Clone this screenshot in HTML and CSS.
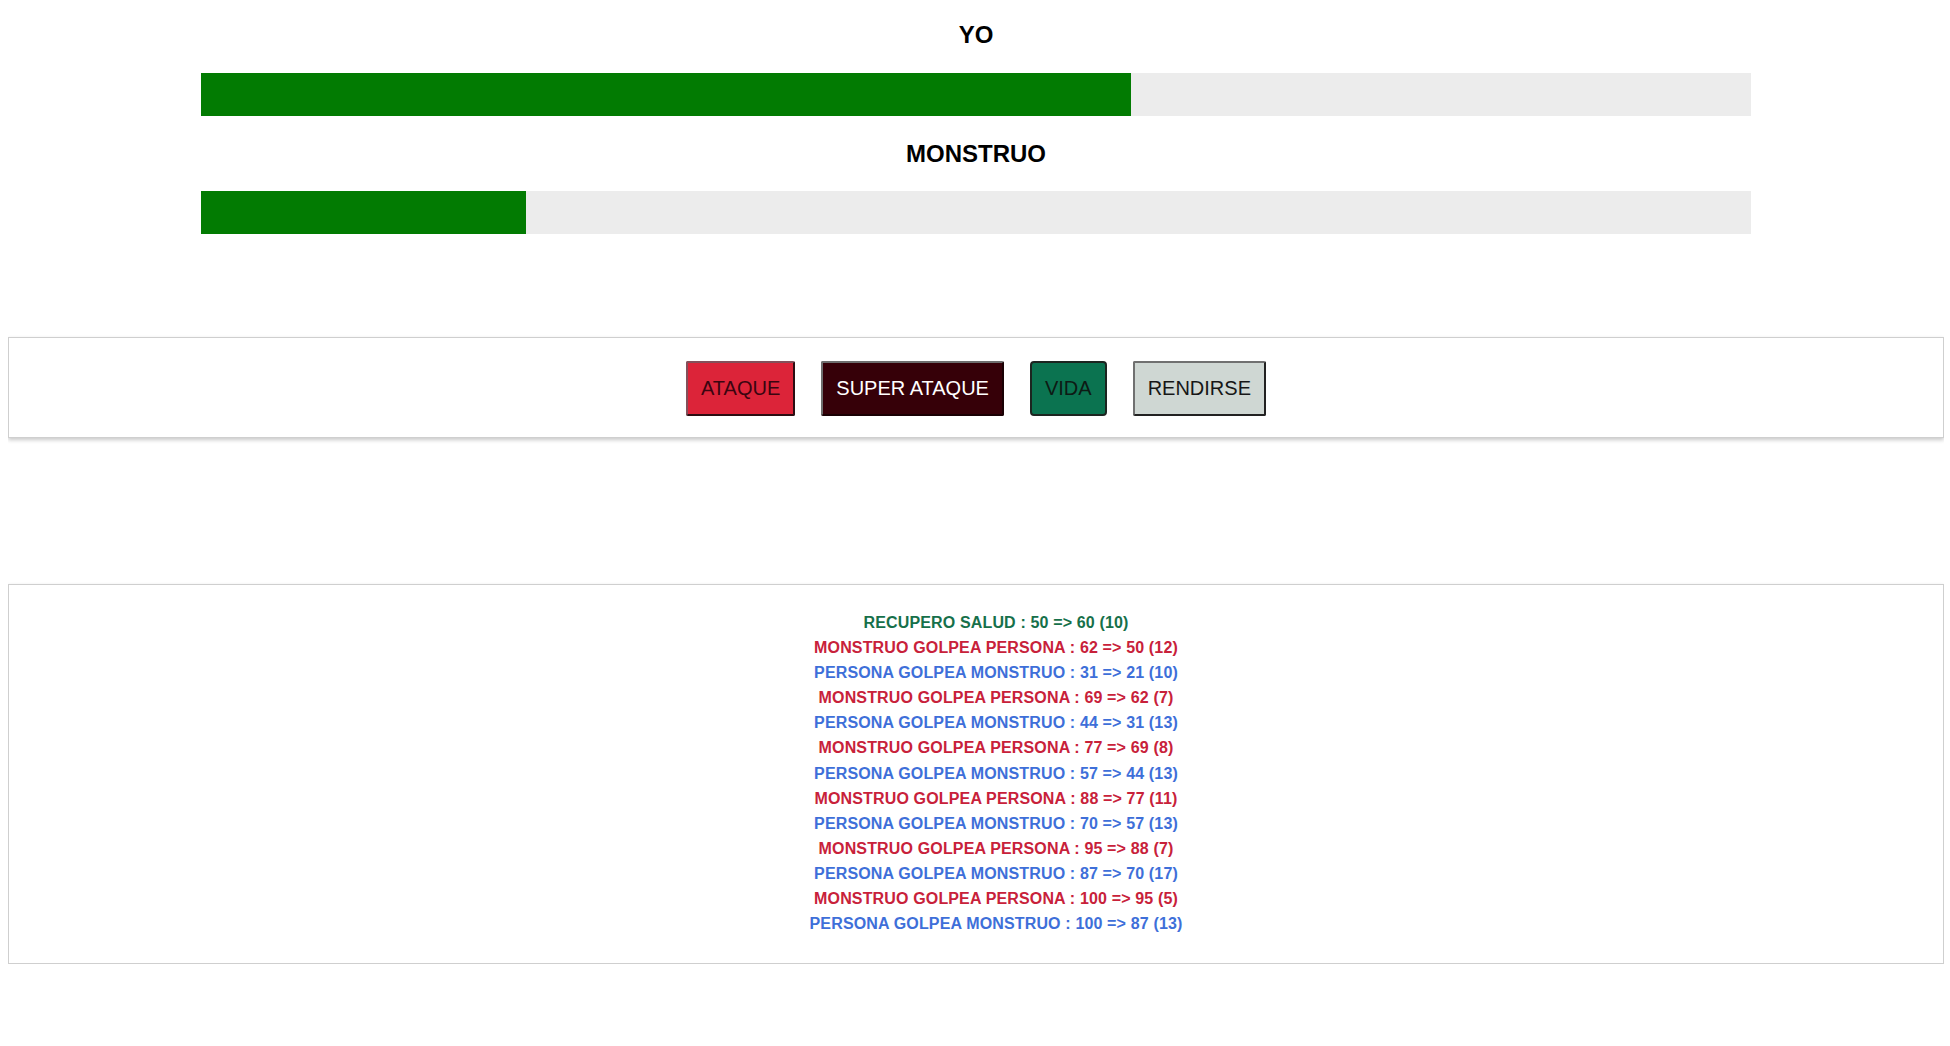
FILE: index.html
```html
<!DOCTYPE html>
<html lang="es">
<head>
<meta charset="utf-8">
<title>Monstruo</title>
<link rel="stylesheet" href="styles.css">
</head>
<body>
  <section class="health">
    <h2 class="name">YO</h2>
    <div class="track"><div class="fill" style="width:60%"></div></div>
    <h2 class="name name-second">MONSTRUO</h2>
    <div class="track"><div class="fill" style="width:21%"></div></div>
  </section>

  <section class="panel controls">
    <button class="btn btn-attack">ATAQUE</button>
    <button class="btn btn-super">SUPER ATAQUE</button>
    <button class="btn btn-heal">VIDA</button>
    <button class="btn btn-give">RENDIRSE</button>
  </section>

  <section class="panel log">
    <ul class="log-list">
      <li class="heal">RECUPERO SALUD : 50 =&gt; 60 (10)</li>
      <li class="monster">MONSTRUO GOLPEA PERSONA : 62 =&gt; 50 (12)</li>
      <li class="player">PERSONA GOLPEA MONSTRUO : 31 =&gt; 21 (10)</li>
      <li class="monster">MONSTRUO GOLPEA PERSONA : 69 =&gt; 62 (7)</li>
      <li class="player">PERSONA GOLPEA MONSTRUO : 44 =&gt; 31 (13)</li>
      <li class="monster">MONSTRUO GOLPEA PERSONA : 77 =&gt; 69 (8)</li>
      <li class="player">PERSONA GOLPEA MONSTRUO : 57 =&gt; 44 (13)</li>
      <li class="monster">MONSTRUO GOLPEA PERSONA : 88 =&gt; 77 (11)</li>
      <li class="player">PERSONA GOLPEA MONSTRUO : 70 =&gt; 57 (13)</li>
      <li class="monster">MONSTRUO GOLPEA PERSONA : 95 =&gt; 88 (7)</li>
      <li class="player">PERSONA GOLPEA MONSTRUO : 87 =&gt; 70 (17)</li>
      <li class="monster">MONSTRUO GOLPEA PERSONA : 100 =&gt; 95 (5)</li>
      <li class="player">PERSONA GOLPEA MONSTRUO : 100 =&gt; 87 (13)</li>
    </ul>
  </section>
</body>
</html>
```

FILE: styles.css
```css
html, body {
  background: #ffffff;
}

body {
  margin: 0 6px 0 8px;
  font-family: "Liberation Sans", Arial, sans-serif;
  color: #000;
}

.health {
  width: calc(80% + 2px);
  margin: 0 auto;
  padding-top: 21px;
}

.name {
  margin: 0 0 24px;
  font-size: 24px;
  line-height: 28px;
  font-weight: bold;
  text-align: center;
}

.name-second {
  margin-top: 24px;
  margin-bottom: 23px;
}

.track {
  height: 43px;
  background: #ececec;
}

.fill {
  height: 100%;
  background: #027b02;
}

.panel {
  background: #fff;
  border: 1px solid #cfcfcf;
  box-shadow: 0 2px 4px rgba(0, 0, 0, 0.22);
}

.controls {
  margin-top: 103px;
  padding: 23px 0 21px;
  display: flex;
  justify-content: center;
  gap: 26px;
}

.btn {
  height: 55px;
  padding: 0 13px;
  font-family: "Liberation Sans", Arial, sans-serif;
  font-size: 20px;
  border-width: 2px;
  border-style: solid;
  border-color: #7a7a7a #1e1e1e #1e1e1e #7a7a7a;
  border-radius: 2px;
}

.btn-attack {
  background: #dc2439;
  color: #3a0510;
  border-color: #84505a #2c0d12 #2c0d12 #84505a;
}

.btn-super {
  background: #360008;
  color: #ffffff;
  border-color: #6e6e6e #1a0004 #1a0004 #6e6e6e;
}

.btn-heal {
  background: #0b7350;
  color: #0d1a14;
  border-color: #1c2520;
  border-radius: 4px;
}

.btn-give {
  background: #cfd7d3;
  color: #161616;
  border-color: #707070 #222 #222 #707070;
}

.log {
  margin-top: 146px;
  padding: 25px 0 27px;
}

.log-list {
  margin: 0;
  padding: 0 0 0 40px;
  list-style: none;
  text-align: center;
  font-size: 16px;
  font-weight: bold;
  line-height: 25.1px;
  letter-spacing: 0.15px;
}

.heal {
  color: #16704a;
}

.monster {
  color: #c8213a;
}

.player {
  color: #3e6fd9;
}
```
